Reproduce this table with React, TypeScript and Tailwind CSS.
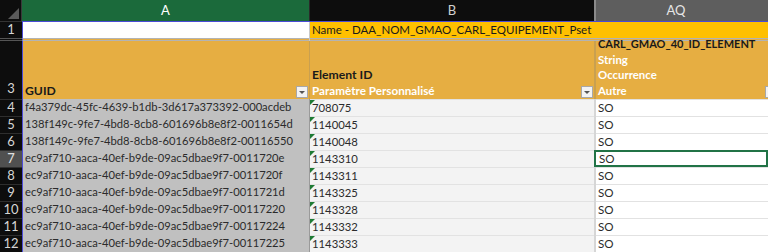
const guids = [
  ["4", "f4a379dc-45fc-4639-b1db-3d617a373392-000acdeb", "708075"],
  ["5", "138f149c-9fe7-4bd8-8cb8-601696b8e8f2-0011654d", "1140045"],
  ["6", "138f149c-9fe7-4bd8-8cb8-601696b8e8f2-00116550", "1140048"],
  ["7", "ec9af710-aaca-40ef-b9de-09ac5dbae9f7-0011720e", "1143310"],
  ["8", "ec9af710-aaca-40ef-b9de-09ac5dbae9f7-0011720f", "1143311"],
  ["9", "ec9af710-aaca-40ef-b9de-09ac5dbae9f7-0011721d", "1143325"],
  ["10", "ec9af710-aaca-40ef-b9de-09ac5dbae9f7-00117220", "1143328"],
  ["11", "ec9af710-aaca-40ef-b9de-09ac5dbae9f7-00117224", "1143332"],
  ["12", "ec9af710-aaca-40ef-b9de-09ac5dbae9f7-00117225", "1143333"],
];

const FilterBtn = () => (
  <div className="w-[12px] h-[12px] bg-[#f3f3f3] border border-[#a8a8a8] flex items-center justify-center shrink-0">
    <div className="w-0 h-0 border-l-[3px] border-r-[3px] border-t-[3px] border-l-transparent border-r-transparent border-t-[#555]" />
  </div>
);

const App = () => {
  return (
    <div className="w-[768px] h-[252px] overflow-hidden bg-[#0d0d0d] text-[11.2px] text-[#2b2b2b] font-['Lato','Open_Sans',sans-serif]">
      {/* column headers */}
      <div className="flex h-[21px]">
        <div className="w-[22px] shrink-0 relative bg-[#0d0d0d] border-r border-[#3a3a3a]">
          <div className="absolute right-[2px] bottom-[2px] w-0 h-0 border-b-[11px] border-l-[11px] border-b-[#5a5a5a] border-l-transparent" />
        </div>
        <div className="w-[287px] shrink-0 bg-[#1b6a3b] text-white flex items-center justify-center text-[13px]">A</div>
        <div className="w-[1px] shrink-0 bg-[#2a2a2a]" />
        <div className="w-[284px] shrink-0 bg-[#0d0d0d] text-[#d0d0d0] flex items-center justify-center text-[13px]">B</div>
        <div className="w-[2px] shrink-0 bg-[#8a8a8a]" />
        <div className="flex-1 min-w-0 bg-[#5e5e5e] text-[#e6e6e6] flex items-center justify-center text-[13px] pr-[12px]">AQ</div>
      </div>

      {/* row 1 */}
      <div className="flex h-[17px]">
        <div className="w-[22px] shrink-0 border-t border-[#333] text-[#d6d6d6] text-[13px] flex items-center justify-center">1</div>
        <div className="w-[287px] shrink-0 bg-white border-t border-l border-[#4b4bd6]" />
        <div className="w-[1px] shrink-0 bg-[#c8c8c8] border-t border-[#4b4bd6]" />
        <div className="flex-1 min-w-0 bg-[#ffc000] border-t border-[#4b4bd6] pl-[2px] flex items-center text-[#1a1a1a] text-[11.5px] whitespace-nowrap">
          Name - DAA_NOM_GMAO_CARL_EQUIPEMENT_Pset
        </div>
      </div>

      {/* hidden row 2 marker */}
      <div className="flex h-[3px]">
        <div className="w-[22px] shrink-0 border-y border-[#555]" />
        <div className="w-[287px] shrink-0 border-l border-[#4b4bd6] bg-[#e6ae42] border-y border-y-[#b3b3b3]" />
        <div className="w-[1px] shrink-0 bg-[#c8c8c8]" />
        <div className="flex-1 min-w-0 bg-[#e6ae42] border-y border-[#b3b3b3]" />
      </div>

      {/* row 3 header */}
      <div className="flex h-[58px] font-bold">
        <div className="w-[22px] shrink-0 text-[#d6d6d6] text-[13px] font-normal flex items-end justify-center pb-[1px]">3</div>
        <div className="w-[287px] shrink-0 bg-[#e6ae42] border-l border-[#4b4bd6] flex items-end justify-between pl-[2px] pr-[1px] pb-[1px]">
          <span className="text-[#1a1a1a] text-[12.2px] leading-[15px]">GUID</span>
          <FilterBtn />
        </div>
        <div className="w-[1px] shrink-0 bg-[#c9a050]" />
        <div className="w-[284px] shrink-0 bg-[#e6ae42] flex items-end justify-between pl-[2px] pr-[1px] pb-[1px]">
          <div className="flex flex-col leading-[15.5px] whitespace-nowrap">
            <span className="text-[#1a1a1a] text-[12.2px]">Element ID</span>
            <span className="text-white text-[11.7px]">Paramètre Personnalisé</span>
          </div>
          <FilterBtn />
        </div>
        <div className="w-[2px] shrink-0 bg-[#c9a050]" />
        <div className="flex-1 min-w-0 bg-[#e6ae42] flex items-end justify-between pl-[2px] pb-[1px]">
          <div className="flex flex-col leading-[15.5px] text-[11.4px] whitespace-nowrap">
            <span className="text-[#1a1a1a] text-[11px]">CARL_GMAO_40_ID_ELEMENT</span>
            <span className="text-white">String</span>
            <span className="text-white">Occurrence</span>
            <span className="text-white">Autre</span>
          </div>
          <div className="w-[3px] h-[12px] shrink-0 bg-[#f3f3f3] border border-r-0 border-[#a8a8a8]" />
        </div>
      </div>

      {/* data rows */}
      {guids.map(([n, guid, id]) => {
        const sel = n === "7";
        return (
          <div key={n} className="flex h-[17px]">
            <div
              className={
                "w-[22px] shrink-0 border-t border-[#2e2e2e] text-[13px] flex items-center justify-center " +
                (sel ? "bg-[#505050] text-[#e0e0e0]" : "text-[#d6d6d6]")
              }
            >
              {n}
            </div>
            <div className="w-[287px] shrink-0 bg-[#c0c0c0] border-l border-[#4b4bd6] pl-[2px] flex items-center whitespace-nowrap overflow-hidden">
              {guid}
            </div>
            <div className="w-[1px] shrink-0 bg-[#9a9a9a]" />
            <div className="w-[284px] shrink-0 relative bg-[#f3f3f3] border-t border-[#e2e2e2] pl-[2px] flex items-center text-[11.3px]">
              <div className="absolute left-0 top-0 w-0 h-0 border-t-[5px] border-r-[5px] border-t-[#1e7b34] border-r-transparent" />
              {id}
            </div>
            <div className="w-[2px] shrink-0 bg-[#d6d6d6]" />
            <div
              className={
                "flex-1 min-w-0 bg-white pl-[2px] flex items-center text-[11.6px] " +
                (sel ? "border-2 border-[#217346] -ml-[2px] pl-[3px]" : "border-t border-[#e2e2e2]")
              }
            >
              SO
            </div>
          </div>
        );
      })}
    </div>
  );
};

export default App;
